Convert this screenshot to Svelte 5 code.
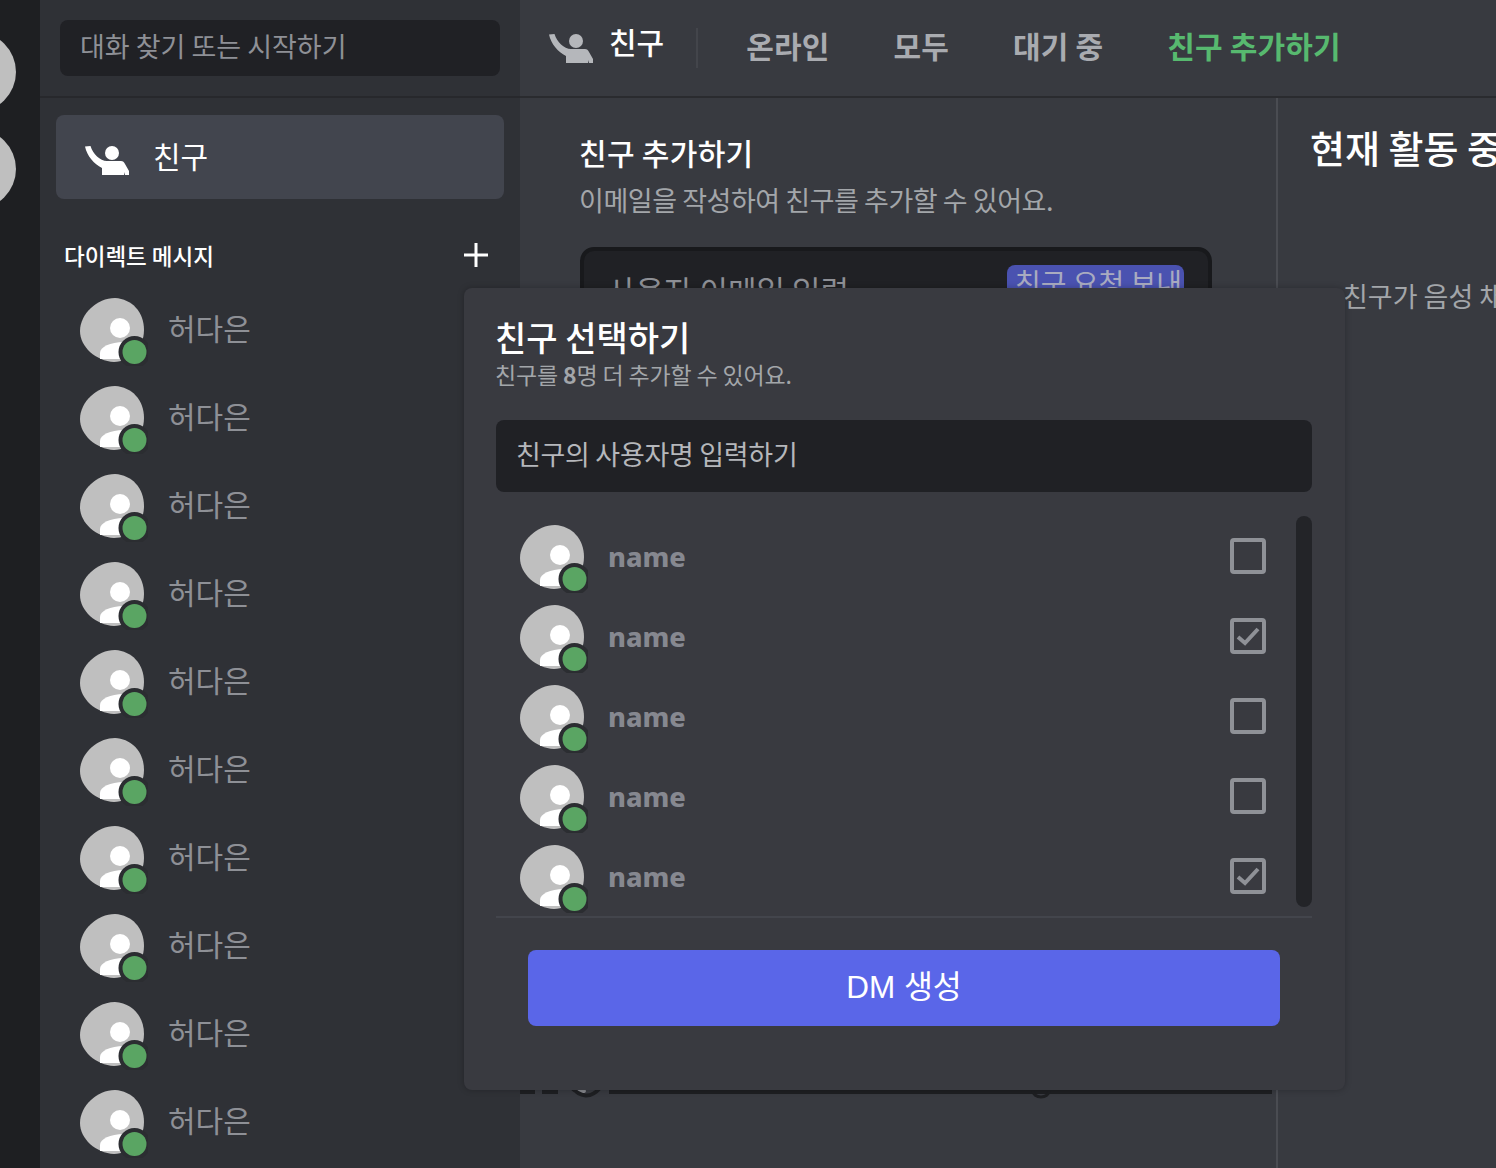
<script>
  const dms = Array(10).fill('허다은');
  const friends = [
    { name: 'name', checked: false },
    { name: 'name', checked: true },
    { name: 'name', checked: false },
    { name: 'name', checked: false },
    { name: 'name', checked: true }
  ];
  const tabs = ['온라인', '모두', '대기 중'];
</script>

{#snippet wave()}
  <svg class="wave" viewBox="0 0 44 31" fill="currentColor">
    <path d="M0 1.500L5.500 1C8 9 15 16 22 16H36C38 16 39 17 40 19L44 26V30H40L39 27V30H17V23C9 19 2 11 0 1.500z" />
    <circle cx="27" cy="8" r="7" />
  </svg>
{/snippet}

{#snippet avatar()}
  <svg class="avatar" viewBox="0 0 68 68">
    <path fill="#bfbfbf" d="M35 0C52 1 64 14 64 32 64 50 50 64 34 64 16 63 0 49 0 33 0 16 17 0 35 0z" />
    <circle cx="40" cy="30" r="10" fill="#fff" />
    <path fill="#fff" d="M20 61v-6c0-6 10-11 24-11v17z" />
    <circle class="ring" cx="54.500" cy="54" r="16" />
    <circle cx="54.500" cy="54" r="12" fill="#5aa563" />
  </svg>
{/snippet}

<div class="app">
  <nav class="rail">
    <span class="server"></span>
    <span class="server"></span>
  </nav>

  <aside class="sidebar">
    <div class="search-wrap">
      <div class="search">대화 찾기 또는 시작하기</div>
    </div>
    <div class="side-body">
      <div class="friends-link">
        {@render wave()}
        <span>친구</span>
      </div>
      <div class="dm-head">
        <span>다이렉트 메시지</span>
        <svg class="plus" viewBox="0 0 24 24"><path d="M10.500 0h3v10.500h10.500v3H13.500V24h-3V13.500H0v-3h10.500z" fill="#fff" /></svg>
      </div>
      <ul class="dm-list">
        {#each dms as dm}
          <li>
            {@render avatar()}
            <span>{dm}</span>
          </li>
        {/each}
      </ul>
    </div>
  </aside>

  <main class="main">
    <header class="topbar">
      <div class="top-title">
        {@render wave()}
        <span>친구</span>
      </div>
      <div class="tabs">
        {#each tabs as tab}
          <span>{tab}</span>
        {/each}
        <span class="green">친구 추가하기</span>
      </div>
    </header>
    <div class="panels">
      <section class="add">
        <h2>친구 추가하기</h2>
        <p>이메일을 작성하여 친구를 추가할 수 있어요.</p>
        <div class="add-box">
          <span>사용자 이메일 입력</span>
          <button>친구 요청 보내기</button>
        </div>
        <!-- bottom edge of the page content, peeks out under the modal -->
        <svg class="behind" viewBox="0 0 752 16" fill="#1e1f22">
          <rect x="0" y="5" width="15" height="4" />
          <rect x="22" y="5" width="16" height="4" />
          <rect x="89" y="5" width="663" height="4" />
          <ellipse cx="60" cy="6" rx="6" ry="3" fill="#85878c" />
          <path d="M50 1Q66 19 80 3" fill="none" stroke="#1e1f22" stroke-width="4" />
          <path d="M513 6a8 6 0 0 0 16 0" fill="none" stroke="#1e1f22" stroke-width="3" />
        </svg>
      </section>
      <section class="active">
        <h2>현재 활동 중</h2>
        <p>친구가 음성 채팅을 시작하면</p>
      </section>
    </div>
  </main>

  <div class="modal">
    <h3>친구 선택하기</h3>
    <p>친구를 <b>8</b>명 더 추가할 수 있어요.</p>
    <div class="modal-input">친구의 사용자명 입력하기</div>
    <div class="picker">
      <ul>
        {#each friends as f}
          <li>
            {@render avatar()}
            <span class="name">{f.name}</span>
            <span class="check">
              {#if f.checked}
                <svg viewBox="0 0 28 28"><path d="M4 15l7 6L24 7" fill="none" stroke="#8f9197" stroke-width="4" /></svg>
              {/if}
            </span>
          </li>
        {/each}
      </ul>
      <div class="scrollbar"></div>
    </div>
    <button class="create">DM 생성</button>
  </div>
</div>

<style>
  :global(body) {
    background: #2f3136;
  }
  .app {
    position: relative;
    display: flex;
    width: 1496px;
    height: 1168px;
    overflow: hidden;
    font-family: "Noto Sans CJK KR", "Noto Sans", sans-serif;
    color: #fff;
  }
  ul {
    list-style: none;
    margin: 0;
    padding: 0;
  }
  h2, h3, p {
    margin: 0;
    font-weight: 500;
  }

  .rail {
    flex: none;
    width: 40px;
    background: #1e1f22;
    overflow: hidden;
    display: flex;
    flex-direction: column;
    gap: 17px;
    padding-top: 32px;
    box-sizing: border-box;
  }
  .server {
    flex: none;
    display: block;
    width: 80px;
    height: 80px;
    margin-left: -64px;
    border-radius: 50%;
    background: #bfbfbf;
  }

  .sidebar {
    flex: none;
    width: 480px;
    background: #2f3136;
    display: flex;
    flex-direction: column;
  }
  .search-wrap {
    flex: none;
    height: 76px;
    border-bottom: 2px solid #27282c;
    padding: 20px 20px 0;
  }
  .search {
    height: 56px;
    line-height: 52px;
    padding-left: 20px;
    border-radius: 8px;
    background: #202125;
    color: #8e9096;
    font-size: 27px;
    font-weight: 400;
  }
  .side-body {
    flex: none;
    padding: 17px 16px 0;
  }
  .friends-link {
    display: flex;
    align-items: center;
    gap: 24px;
    height: 84px;
    padding-left: 29px;
    border-radius: 8px;
    background: #42454e;
    font-size: 30px;
    color: #fff;
  }
  .friends-link .wave {
    margin-top: 6px;
  }
  .friends-link span {
    margin-top: -4px;
  }
  .wave {
    width: 44px;
    height: 31px;
    flex: none;
  }
  .dm-head {
    display: flex;
    justify-content: space-between;
    align-items: center;
    margin-top: 39px;
    padding: 0 16px 0 8px;
    height: 34px;
    font-size: 22.5px;
    font-weight: 500;
  }
  .plus {
    width: 24px;
    height: 24px;
  }
  .dm-list {
    margin-top: 26px;
    padding-left: 24px;
  }
  .dm-list li {
    display: flex;
    align-items: flex-start;
    gap: 24px;
    height: 88px;
    color: #8e9096;
    font-size: 30px;
  }
  .dm-list li span {
    line-height: 58px;
  }
  .avatar {
    flex: none;
    width: 68px;
    height: 68px;
    margin-right: -4px;
  }
  .ring {
    fill: #2b2d31;
  }

  .main {
    flex: 1;
    min-width: 0;
    background: #383a40;
    display: flex;
    flex-direction: column;
  }
  .topbar {
    flex: none;
    height: 96px;
    border-bottom: 2px solid #2a2b2f;
    display: flex;
    align-items: center;
    padding-left: 29px;
  }
  .top-title {
    display: flex;
    align-items: center;
    gap: 16px;
    height: 40px;
    padding-right: 32px;
    border-right: 2px solid #43454b;
    color: #b5b7bb;
  }
  .top-title span {
    color: #fff;
    font-size: 30px;
    font-weight: 500;
    line-height: 30px;
    margin-top: -15px;
  }
  .tabs {
    display: flex;
    gap: 64px;
    padding-left: 48px;
    font-size: 30px;
    font-weight: 700;
    letter-spacing: 0.15px;
    color: #a9abb0;
    margin-top: -6px;
  }
  .green {
    color: #57b96f;
  }
  .panels {
    flex: 1;
    display: flex;
    min-height: 0;
  }
  .add {
    flex: none;
    width: 758px;
    box-sizing: border-box;
    border-right: 2px solid #4a4c52;
    padding: 33px 64px 0 59px;
  }
  .add h2 {
    font-size: 30px;
    line-height: 42px;
    letter-spacing: 0.3px;
  }
  .add p {
    margin-top: 7px;
    font-size: 27px;
    line-height: 40px;
    color: #a3a6aa;
    font-weight: 400;
    letter-spacing: -0.45px;
  }
  .add-box {
    position: relative;
    width: 632px;
    height: 110px;
    margin: 27px 0 0 1px;
    box-sizing: border-box;
    border: 4px solid #18191c;
    border-radius: 14px;
    background: #202125;
    color: #8e9096;
    font-size: 31px;
    padding: 16px 23px;
  }
  .add-box button {
    position: absolute;
    top: 14px;
    right: 24px;
    width: 177px;
    height: 60px;
    box-sizing: border-box;
    border: 0;
    border-radius: 8px;
    background: #4a52b0;
    color: #a9abc0;
    font: inherit;
    font-size: 28px;
    line-height: 34px;
    padding: 0 0 28px 8px;
    text-align: left;
    display: block;
    white-space: nowrap;
    overflow: hidden;
  }
  .behind {
    display: block;
    width: 752px;
    height: 16px;
    margin: 728px 0 0 -59px;
  }
  .active {
    flex: 1;
    min-width: 0;
    padding: 22px 0 0 32px;
    white-space: nowrap;
    overflow: hidden;
  }
  .active h2 {
    font-size: 38px;
    line-height: 54px;
    font-weight: 500;
  }
  .active p {
    margin: 102px 0 0 33px;
    font-size: 27px;
    color: #a3a6aa;
    font-weight: 400;
  }

  /* modal sits over the friends page */
  .modal {
    position: absolute;
    left: 464px;
    top: 288px;
    width: 881px;
    height: 802px;
    box-sizing: border-box;
    padding: 26px 32px 0;
    border-radius: 8px;
    background: #393a40;
    box-shadow: 0 0 6px rgba(0, 0, 0, 0.25);
  }
  .modal h3 {
    font-size: 34px;
    line-height: 46px;
    margin-left: -1px;
  }
  .modal > p {
    font-size: 23px;
    line-height: 30px;
    margin: -1px 0 0 -1px;
    color: #a3a6aa;
    font-weight: 400;
    letter-spacing: -0.15px;
  }
  .modal-input {
    margin-top: 31px;
    height: 72px;
    line-height: 68px;
    width: 816px;
    padding-left: 20px;
    box-sizing: border-box;
    border-radius: 8px;
    background: #202125;
    color: #b5b7bb;
    font-size: 27px;
    letter-spacing: -0.3px;
  }
  .picker {
    position: relative;
    width: 816px;
    height: 402px;
    margin-top: 24px;
    padding-top: 9px;
    box-sizing: border-box;
    border-bottom: 2px solid #43454c;
  }
  .picker li {
    display: flex;
    height: 80px;
    padding-left: 24px;
  }
  .name {
    margin-left: 24px;
    line-height: 64px;
    font-family: "Noto Sans", sans-serif;
    font-weight: 800;
    font-size: 27.2px;
    color: #868890;
  }
  .check {
    margin: 13px 46px 0 auto;
    width: 36px;
    height: 36px;
    box-sizing: border-box;
    border: 4px solid #8f9197;
    border-radius: 4px;
  }
  .check svg {
    display: block;
    width: 28px;
    height: 28px;
  }
  .scrollbar {
    position: absolute;
    right: 0;
    top: 0;
    width: 16px;
    height: 391px;
    border-radius: 8px;
    background: #232428;
  }
  .create {
    display: block;
    width: 752px;
    height: 76px;
    margin: 32px 0 0 32px;
    padding: 0 0 8px;
    border: 0;
    border-radius: 8px;
    background: #5a66e8;
    color: #fff;
    font-family: "Liberation Sans", "Noto Sans CJK KR", sans-serif;
    font-size: 31.5px;
  }
</style>
